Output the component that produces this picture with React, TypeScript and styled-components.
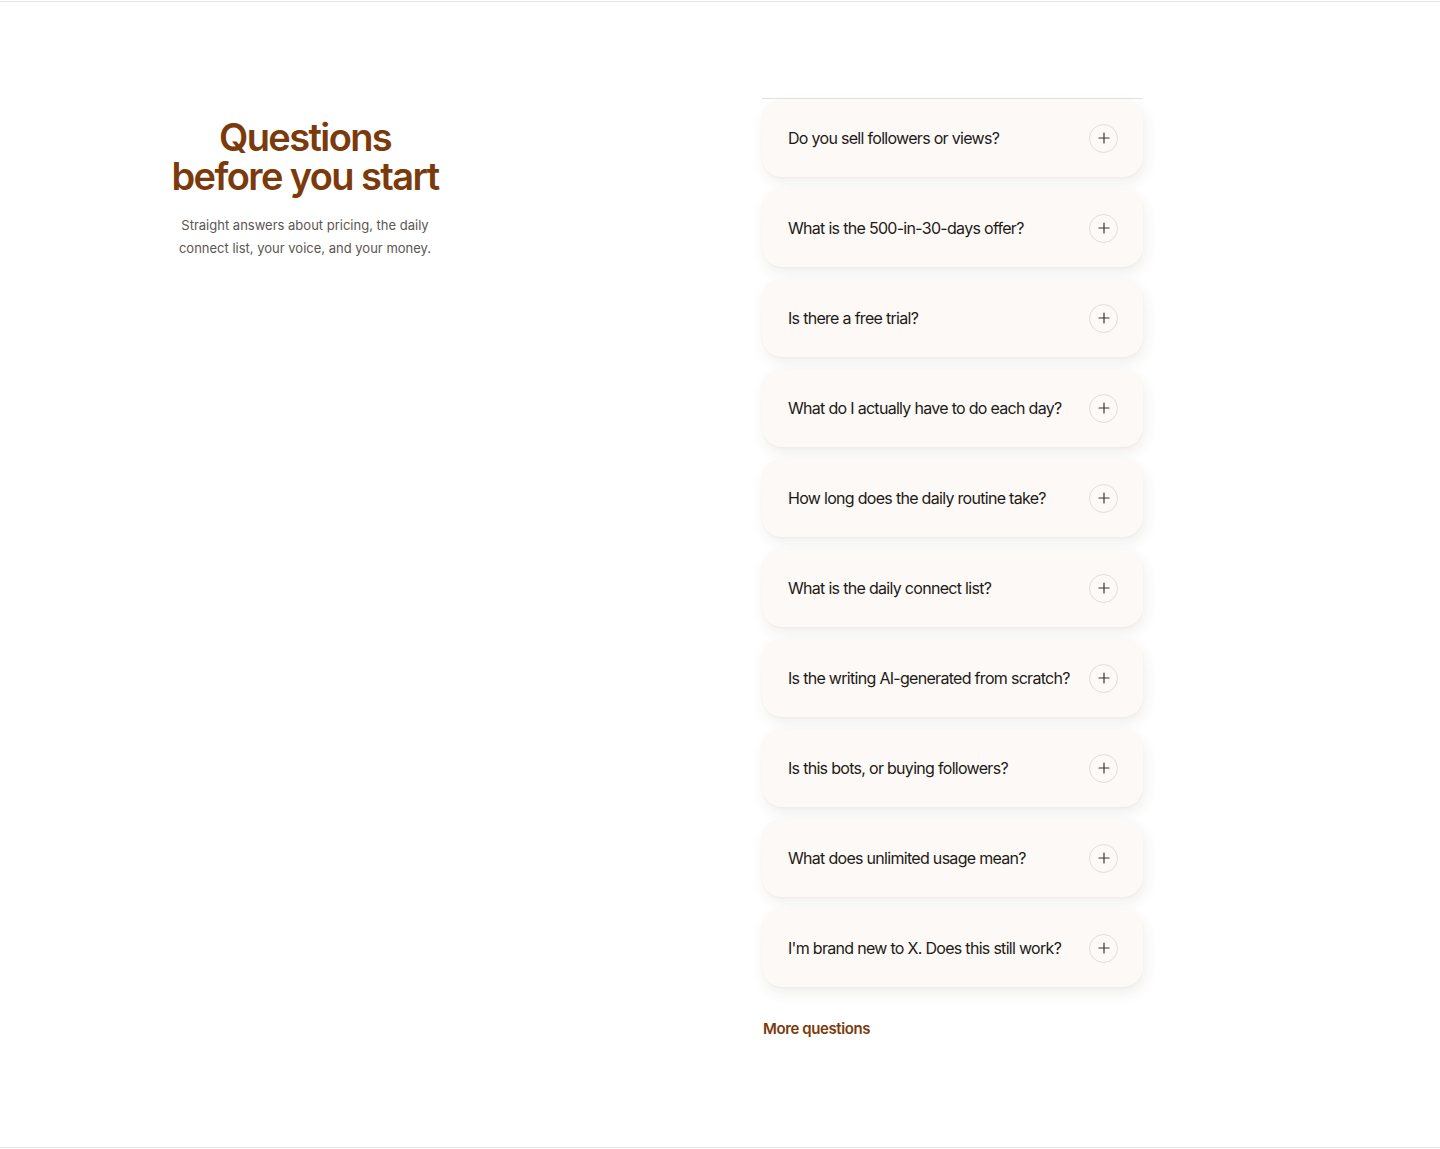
import React, { useState } from "react"
import styled, { createGlobalStyle } from "styled-components"

const GlobalStyle = createGlobalStyle`
	html, body {
		margin: 0;
		padding: 0;
		background: #ffffff;
	}
	body {
		padding-top: 1px;
		font-family: Inter, "Noto Sans", sans-serif;
		-webkit-font-smoothing: antialiased;
	}
`

const faqs = [
	"Do you sell followers or views?",
	"What is the 500-in-30-days offer?",
	"Is there a free trial?",
	"What do I actually have to do each day?",
	"How long does the daily routine take?",
	"What is the daily connect list?",
	"Is the writing AI-generated from scratch?",
	"Is this bots, or buying followers?",
	"What does unlimited usage mean?",
	"I'm brand new to X. Does this still work?",
]

const Section = styled.section`
	border-top: 1px solid #e6e4e2;
	border-bottom: 1px solid #e8e4e0;
	padding: 96px 0 109px 148px;
	display: grid;
	grid-template-columns: 314px 381px;
	column-gap: 300px;
	align-items: start;
`

const Intro = styled.div`
	padding-top: 20px;
	text-align: center;
`

const Heading = styled.h2`
	margin: 0;
	font-family: Inter, "Noto Sans", sans-serif;
	font-size: 38px;
	line-height: 39px;
	font-weight: 600;
	letter-spacing: -1.6px;
	color: #7a3a0b;
`

const Lead = styled.p`
	margin: 18px auto 0;
	width: 260px;
	font-size: 13px;
	line-height: 23px;
	color: #5a5652;
`

const List = styled.div`
	border-top: 1px solid #e4e2df;
	display: flex;
	flex-direction: column;
	gap: 12px;
`

const Card = styled.button`
	all: unset;
	box-sizing: border-box;
	height: 78px;
	display: flex;
	align-items: center;
	justify-content: space-between;
	padding: 0 25px 0 26px;
	background: #fcf9f6;
	border-radius: 20px;
	box-shadow: 2px 6px 14px rgba(70, 45, 20, 0.08), 0 1px 2px rgba(70, 45, 20, 0.03);
	cursor: pointer;
`

const Question = styled.span`
	font-size: 16px;
	font-weight: 400;
	letter-spacing: -0.7px;
	color: #1e1a17;
`

const Toggle = styled.span`
	flex: none;
	width: 27px;
	height: 27px;
	border-radius: 50%;
	border: 1px solid #e3ddd8;
	display: flex;
	align-items: center;
	justify-content: center;
	color: #3b3632;
`

const MoreLink = styled.a`
	display: inline-block;
	margin-top: 32px;
	margin-left: 1px;
	font-size: 15px;
	font-weight: 600;
	letter-spacing: -0.4px;
	color: #7a3a0b;
	text-decoration: none;
`

const PlusIcon = () => (
	<svg width="12" height="12" viewBox="0 0 12 12" fill="none">
		<path d="M6 1v10M1 6h10" stroke="currentColor" strokeWidth="1.2" strokeLinecap="round" />
	</svg>
)

export default function App() {
	const [open, setOpen] = useState<number | null>(null)

	return (
		<>
			<GlobalStyle />
			<Section>
				<Intro>
					<Heading>
						Questions
						<br />
						before you start
					</Heading>
					<Lead>Straight answers about pricing, the daily connect list, your voice, and your money.</Lead>
				</Intro>
				<div>
					<List>
						{faqs.map((q, i) => (
							<Card key={q} onClick={() => setOpen(open === i ? null : i)}>
								<Question>{q}</Question>
								<Toggle>
									<PlusIcon />
								</Toggle>
							</Card>
						))}
					</List>
					<MoreLink href="#">More questions</MoreLink>
				</div>
			</Section>
		</>
	)
}
